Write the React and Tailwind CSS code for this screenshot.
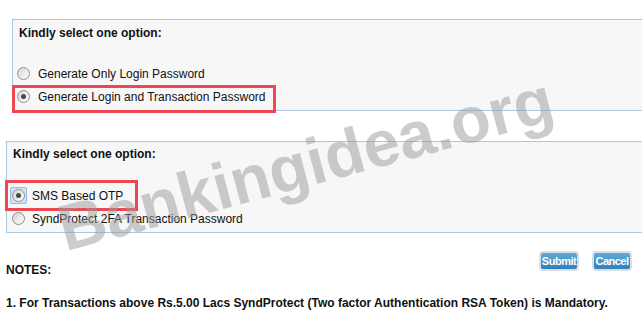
import React from 'react';

const Radio = ({ checked, focused }) => {
  const circle = (
    <span className="w-[13px] h-[13px] rounded-full border border-[#8f8f8f] bg-linear-to-br from-[#d4d4d4] to-white flex items-center justify-center shrink-0">
      {checked && <span className="w-[5px] h-[5px] rounded-full bg-[#4a4a4a]" />}
    </span>
  );
  if (focused) {
    return (
      <span className="w-[17px] h-[17px] -ml-[2px] -mr-[2px] rounded-[2px] bg-[#cfe2f7] border border-[#94bbe6] flex items-center justify-center shrink-0">
        {circle}
      </span>
    );
  }
  return circle;
};

const Option = ({ label, checked, focused, gap }) => (
  <div className="flex items-center h-[23px]">
    <Radio checked={checked} focused={focused} />
    <span className={gap}>{label}</span>
  </div>
);

const App = () => {
  return (
    <div
      className="relative w-[642px] h-[316px] bg-white overflow-hidden text-[12px] leading-[14px] text-[#111]"
      style={{ fontFamily: '"Liberation Sans", Arial, sans-serif' }}
    >
      {/* first option panel */}
      <div className="ml-[12px] mt-[19px] h-[92px] border-y border-l border-[#a8c8e1] bg-[#f7f7f7] pl-[6px] pt-[6px]">
        <p className="font-bold">Kindly select one option:</p>
        <div className="mt-[22px] -ml-[2px]">
          <Option label="Generate Only Login Password" gap="ml-[8px]" />
          <Option label="Generate Login and Transaction Password" checked gap="ml-[8px]" />
        </div>
      </div>

      {/* second option panel */}
      <div className="ml-[6px] mt-[30px] h-[92px] border-y border-l border-[#a8c8e1] bg-[#f7f7f7] pl-[6px] pt-[5px]">
        <p className="font-bold">Kindly select one option:</p>
        <div className="mt-[23px] -ml-[1px]">
          <Option label="SMS Based OTP" checked focused gap="ml-[7px]" />
          <Option label="SyndProtect 2FA Transaction Password" gap="ml-[7px]" />
        </div>
      </div>

      {/* notes + actions */}
      <div className="flex justify-between mt-[18px] pl-[6px] pr-[10px] h-[26px]">
        <p className="font-bold self-end">NOTES:</p>
        <div className="flex gap-[13px] items-start">
          <button className="w-[40px] h-[20px] px-0 rounded-[4px] border-2 border-[#d9dfe4] bg-linear-to-b from-[#5eaad9] to-[#2f80b8] text-white font-bold text-[11px] tracking-[-0.5px] leading-none">
            Submit
          </button>
          <button className="w-[40px] h-[20px] px-0 rounded-[4px] border-2 border-[#d9dfe4] bg-linear-to-b from-[#5eaad9] to-[#2f80b8] text-white font-bold text-[11px] tracking-[-0.5px] leading-none">
            Cancel
          </button>
        </div>
      </div>
      <p className="mt-[19px] pl-[6px] font-bold">
        1. For Transactions above Rs.5.00 Lacs SyndProtect (Two factor Authentication RSA Token) is Mandatory.
      </p>

      {/* annotation boxes */}
      <div className="absolute left-[12px] top-[85px] w-[264px] h-[28px] border-[3px] border-[#ef4651]" />
      <div className="absolute left-[5px] top-[180px] w-[133px] h-[31px] border-[3px] border-[#ef4651]" />

      {/* watermark */}
      <div className="absolute left-[68px] top-[197px] h-[64px] origin-bottom-left -rotate-[15deg] text-[65px] leading-[64px] font-bold text-[#999999]/50 whitespace-nowrap pointer-events-none select-none">
        Bankingidea.org
      </div>
    </div>
  );
};

export default App;
